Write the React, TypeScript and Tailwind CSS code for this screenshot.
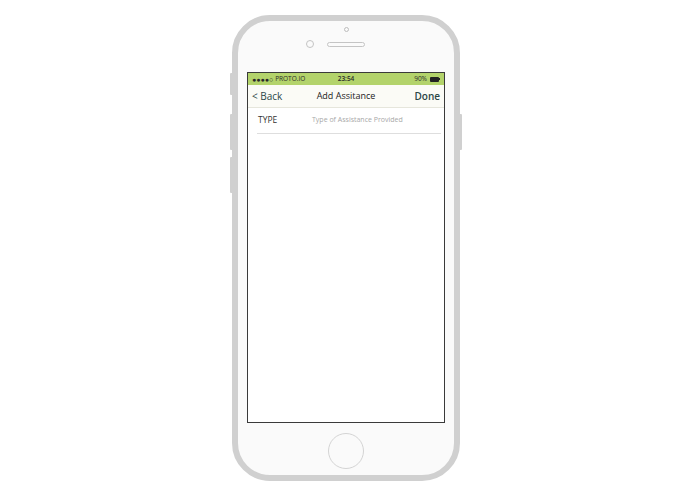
import React from "react";

export default function App() {
  return (
    <div className="w-[695px] h-[494px] bg-white" style={{ fontFamily: '"Open Sans", "Liberation Sans", sans-serif' }}>
      <div className="pt-[15px] pl-[232px]">
        <div className="relative w-[228px] h-[466px]">
          {/* side buttons */}
          <div className="absolute left-[-2px] top-[58px] w-[3px] h-[22px] bg-[#d0d0d0] rounded-l-[1px]" />
          <div className="absolute left-[-2px] top-[99px] w-[3px] h-[36px] bg-[#d0d0d0] rounded-l-[1px]" />
          <div className="absolute left-[-2px] top-[142px] w-[3px] h-[36px] bg-[#d0d0d0] rounded-l-[1px]" />
          <div className="absolute right-[-2px] top-[99px] w-[3px] h-[36px] bg-[#d0d0d0] rounded-r-[1px]" />
          <div className="relative w-full h-full rounded-[38px] border-[6px] border-[#d0d0d0] bg-[#fafafa] flex flex-col items-center">
            <div className="mt-[6px] w-[5px] h-[5px] rounded-full border border-[#bdbdbd]" />
            <div className="mt-[8px] flex items-center gap-[13px] h-[8px]">
              <div className="w-[8px] h-[8px] rounded-full border border-[#c4c4c4]" />
              <div className="w-[38px] h-[5px] rounded-full border border-[#c4c4c4]" />
              <div className="w-[8px] h-[8px]" />
            </div>
            <div className="mt-[24px] w-[198px] h-[351px] border border-[#3a3a3a] bg-white flex flex-col">
              <div className="h-[12px] bg-[#b3d36b] flex items-center justify-between px-[4px] text-[6.5px] leading-none text-[#2a2a2a]">
                <div className="w-[62px] flex items-center">
                  <span className="text-[7px]">●●●●○</span>
                  <span className="ml-[2px]">PROTO.IO</span>
                </div>
                <div className="font-semibold">23:54</div>
                <div className="w-[62px] flex items-center justify-end gap-[3px]">
                  <span>90%</span>
                  <div className="flex items-center">
                    <div className="w-[9px] h-[5px] bg-[#222] rounded-[1px]" />
                    <div className="w-[1px] h-[2px] bg-[#222]" />
                  </div>
                </div>
              </div>
              <div className="h-[23px] bg-[#fbfbf6] border-b border-[#e6e6dc] flex items-center justify-between px-[4px]">
                <span className="w-[50px] text-[10px] font-medium text-[#2c4747]">&lt; Back</span>
                <span className="text-[9px] text-[#222]">Add Assitance</span>
                <span className="w-[50px] text-right text-[10px] font-semibold text-[#2c4747]">Done</span>
              </div>
              <div className="ml-[9px] mr-[3px] h-[26px] border-b border-[#dedede] flex items-center">
                <span className="w-[55px] pl-[1px] text-[8.5px] text-[#333]">TYPE</span>
                <span className="text-[7px] text-[#a8a8a8]">Type of Assistance Provided</span>
              </div>
            </div>
            <div className="mt-[10px] w-[36px] h-[36px] rounded-full border border-[#d4d4d4]" />
          </div>
        </div>
      </div>
    </div>
  );
}
